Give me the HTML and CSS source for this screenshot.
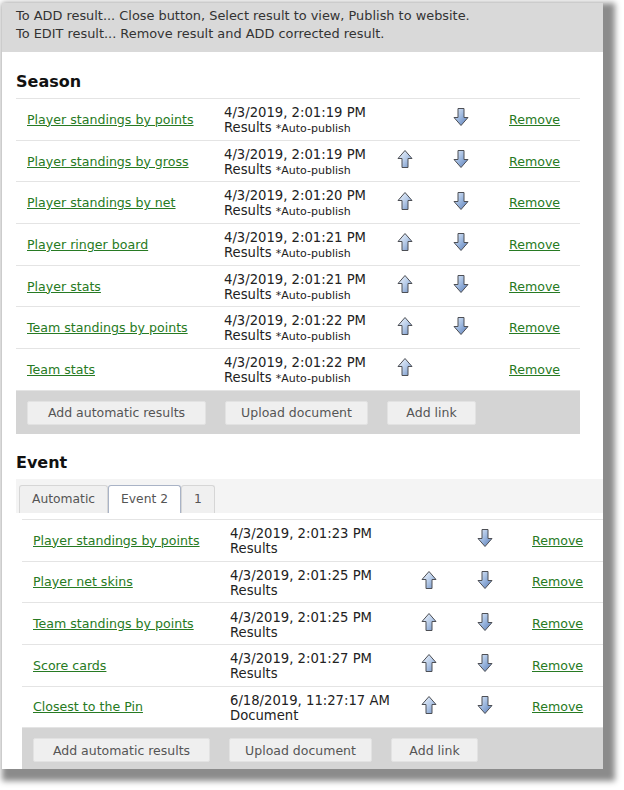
FILE: index.html
```html
<!DOCTYPE html>
<html lang="en">
<head>
    <meta charset="UTF-8">
    <title>Results</title>
    <link rel="stylesheet" href="styles.css">
</head>
<body>

    <svg width="0" height="0" class="defs">
        <defs>
            <linearGradient id="upFill" x1="0" y1="0" x2="1" y2="1">
                <stop offset="0" stop-color="#f4f8fd"/>
                <stop offset="0.5" stop-color="#b9cde9"/>
                <stop offset="1" stop-color="#6d8fc4"/>
            </linearGradient>
            <linearGradient id="downFill" x1="0" y1="0" x2="1" y2="1">
                <stop offset="0" stop-color="#e3ecf8"/>
                <stop offset="0.5" stop-color="#9ab6de"/>
                <stop offset="1" stop-color="#5879b3"/>
            </linearGradient>
            <symbol id="up" viewBox="0 0 16 20">
                <path d="M8 1.5 L15 9.5 L11 9.5 L11 18.5 L5 18.5 L5 9.5 L1 9.5 Z" fill="url(#upFill)" stroke="#4d4f55" stroke-width="1" stroke-linejoin="round"/>
            </symbol>
            <symbol id="down" viewBox="0 0 16 20">
                <path d="M8 18.5 L15 10.5 L11 10.5 L11 1.5 L5 1.5 L5 10.5 L1 10.5 Z" fill="url(#downFill)" stroke="#4d4f55" stroke-width="1" stroke-linejoin="round"/>
            </symbol>
        </defs>
    </svg>

    <div class="panel">
        <div class="info">
            <p>To ADD result... Close button, Select result to view, Publish to website.</p>
            <p>To EDIT result... Remove result and ADD corrected result.</p>
        </div>

        <!-- Season results -->
        <section class="season">
            <h2>Season</h2>
            <div class="results">
                <div class="row">
                    <a href="#">Player standings by points</a>
                    <div class="when">4/3/2019, 2:01:19 PM<br>Results <small>*Auto-publish</small></div>
                    <span class="move"></span>
                    <span class="move"><svg><use href="#down"/></svg></span>
                    <a href="#" class="remove">Remove</a>
                </div>
                <div class="row">
                    <a href="#">Player standings by gross</a>
                    <div class="when">4/3/2019, 2:01:19 PM<br>Results <small>*Auto-publish</small></div>
                    <span class="move"><svg><use href="#up"/></svg></span>
                    <span class="move"><svg><use href="#down"/></svg></span>
                    <a href="#" class="remove">Remove</a>
                </div>
                <div class="row">
                    <a href="#">Player standings by net</a>
                    <div class="when">4/3/2019, 2:01:20 PM<br>Results <small>*Auto-publish</small></div>
                    <span class="move"><svg><use href="#up"/></svg></span>
                    <span class="move"><svg><use href="#down"/></svg></span>
                    <a href="#" class="remove">Remove</a>
                </div>
                <div class="row">
                    <a href="#">Player ringer board</a>
                    <div class="when">4/3/2019, 2:01:21 PM<br>Results <small>*Auto-publish</small></div>
                    <span class="move"><svg><use href="#up"/></svg></span>
                    <span class="move"><svg><use href="#down"/></svg></span>
                    <a href="#" class="remove">Remove</a>
                </div>
                <div class="row">
                    <a href="#">Player stats</a>
                    <div class="when">4/3/2019, 2:01:21 PM<br>Results <small>*Auto-publish</small></div>
                    <span class="move"><svg><use href="#up"/></svg></span>
                    <span class="move"><svg><use href="#down"/></svg></span>
                    <a href="#" class="remove">Remove</a>
                </div>
                <div class="row">
                    <a href="#">Team standings by points</a>
                    <div class="when">4/3/2019, 2:01:22 PM<br>Results <small>*Auto-publish</small></div>
                    <span class="move"><svg><use href="#up"/></svg></span>
                    <span class="move"><svg><use href="#down"/></svg></span>
                    <a href="#" class="remove">Remove</a>
                </div>
                <div class="row">
                    <a href="#">Team stats</a>
                    <div class="when">4/3/2019, 2:01:22 PM<br>Results <small>*Auto-publish</small></div>
                    <span class="move"><svg><use href="#up"/></svg></span>
                    <span class="move"></span>
                    <a href="#" class="remove">Remove</a>
                </div>
            </div>
            <div class="actions">
                <button class="btn-auto">Add automatic results</button>
                <button class="btn-upload">Upload document</button>
                <button class="btn-link">Add link</button>
            </div>
        </section>

        <!-- Event results -->
        <section class="event">
            <h2>Event</h2>
            <div class="tabs">
                <span class="tab">Automatic</span>
                <span class="tab active">Event 2</span>
                <span class="tab">1</span>
            </div>
            <div class="tab-body">
                <div class="results">
                    <div class="row">
                        <a href="#">Player standings by points</a>
                        <div class="when">4/3/2019, 2:01:23 PM<br>Results</div>
                        <span class="move"></span>
                        <span class="move"><svg><use href="#down"/></svg></span>
                        <a href="#" class="remove">Remove</a>
                    </div>
                    <div class="row">
                        <a href="#">Player net skins</a>
                        <div class="when">4/3/2019, 2:01:25 PM<br>Results</div>
                        <span class="move"><svg><use href="#up"/></svg></span>
                        <span class="move"><svg><use href="#down"/></svg></span>
                        <a href="#" class="remove">Remove</a>
                    </div>
                    <div class="row">
                        <a href="#">Team standings by points</a>
                        <div class="when">4/3/2019, 2:01:25 PM<br>Results</div>
                        <span class="move"><svg><use href="#up"/></svg></span>
                        <span class="move"><svg><use href="#down"/></svg></span>
                        <a href="#" class="remove">Remove</a>
                    </div>
                    <div class="row">
                        <a href="#">Score cards</a>
                        <div class="when">4/3/2019, 2:01:27 PM<br>Results</div>
                        <span class="move"><svg><use href="#up"/></svg></span>
                        <span class="move"><svg><use href="#down"/></svg></span>
                        <a href="#" class="remove">Remove</a>
                    </div>
                    <div class="row">
                        <a href="#">Closest to the Pin</a>
                        <div class="when">6/18/2019, 11:27:17 AM<br>Document</div>
                        <span class="move"><svg><use href="#up"/></svg></span>
                        <span class="move"><svg><use href="#down"/></svg></span>
                        <a href="#" class="remove">Remove</a>
                    </div>
                </div>
                <div class="actions">
                    <button class="btn-auto">Add automatic results</button>
                    <button class="btn-upload">Upload document</button>
                    <button class="btn-link">Add link</button>
                </div>
            </div>
        </section>
    </div>

</body>
</html>
```

FILE: styles.css
```css
body {
    margin: 0;
    padding-bottom: 24px;
    background: #ffffff;
    font-family: "DejaVu Sans", Verdana, sans-serif;
    color: #222;
}

.defs {
    position: absolute;
}

.panel {
    margin: 3px 0 0 2px;
    width: 601px;
    height: 766px;
    background: #ffffff;
    box-shadow: 6px 6px 6px 6px #8b8b8b;
    overflow: hidden;
}

.info {
    background: #d9d9d9;
    height: 49px;
    padding: 4px 0 0 14px;
    box-sizing: border-box;
    font-size: 12.9px;
    color: #333;
}

.info p {
    margin: 0;
    line-height: 18px;
}

h2 {
    font-size: 16px;
    font-weight: bold;
    color: #111;
    margin: 0;
    line-height: 20px;
}

.season {
    padding: 20px 23px 0 14px;
}

.season h2 {
    margin-bottom: 6px;
}

.event {
    padding: 19px 0 0 14px;
}

.event h2 {
    margin-bottom: 6px;
}

/* result rows */
.results {
    border-top: 1px solid #e4e4e4;
}

.row {
    display: grid;
    grid-template-columns: 208px 159px 44px 68px 1fr;
    align-items: center;
    height: 40.7px;
    border-bottom: 1px solid #e4e4e4;
    font-size: 12.6px;
}

.tab-body .row {
    grid-template-columns: 208px 177px 44px 68px 1fr;
}

.row a {
    color: #277a23;
    padding-left: 11px;
}

.row a.remove {
    padding-left: 14px;
}

.tab-body .row a.remove {
    padding-left: 13px;
}

.when {
    font-size: 13.2px;
    line-height: 15px;
    color: #222;
    padding-top: 2px;
}

.when small {
    font-size: 11px;
}

.move {
    display: flex;
    justify-content: center;
    padding-bottom: 4px;
}

.move svg {
    width: 16px;
    height: 20px;
}

/* button bars */
.actions {
    background: #d4d4d4;
    height: 43px;
    padding: 10px 0 0 11px;
    box-sizing: border-box;
    display: flex;
    gap: 19px;
    align-items: flex-start;
}

.actions button {
    height: 24px;
    padding: 0;
    background: #efefef;
    border: 1px solid #e2e2e2;
    border-radius: 2px;
    font-family: "DejaVu Sans", sans-serif;
    font-size: 12.5px;
    color: #555;
}

.btn-auto {
    width: 179px;
}

.btn-upload {
    width: 143px;
}

.btn-link {
    width: 89px;
}

.tab-body .btn-auto {
    width: 177px;
}

.tab-body .btn-link {
    width: 87px;
}

/* tabs */
.tabs {
    background: #f4f4f4;
    height: 34px;
    padding: 6px 0 0 3px;
    box-sizing: border-box;
    display: flex;
    align-items: flex-end;
}

.tab {
    height: 28px;
    box-sizing: border-box;
    padding: 6px 12px 0;
    background: #f0f0f0;
    border: 1px solid #d6d6d6;
    border-bottom: none;
    border-radius: 3px 3px 0 0;
    font-size: 12.3px;
    color: #555;
}

.tab.active {
    background: #ffffff;
    border-color: #a9b3c6;
}

.tab-body {
    padding: 6px 0 0 6px;
}
```
